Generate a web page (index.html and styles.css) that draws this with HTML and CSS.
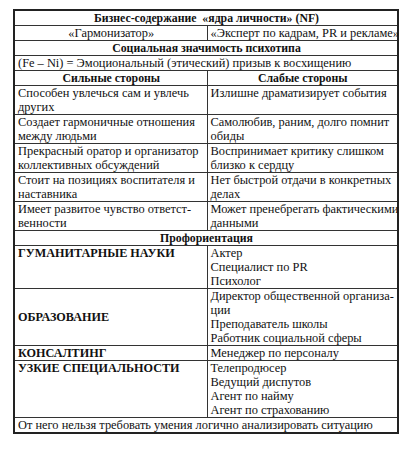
FILE: index.html
```html
<!DOCTYPE html>
<html lang="ru">
<head>
<meta charset="utf-8">
<link rel="stylesheet" href="styles.css">
</head>
<body>
<div class="page">
<table class="sheet">
  <colgroup><col class="c1"><col class="c2"></colgroup>
  <tr><td colspan="2" class="head">Бизнес-содержание&nbsp; «ядра личности» (NF)</td></tr>
  <tr><td class="center">«Гармонизатор»</td><td class="center">«Эксперт по кадрам, PR и рекламе»</td></tr>
  <tr><td colspan="2" class="head">Социальная значимость психотипа</td></tr>
  <tr><td colspan="2">(Fe – Ni) = Эмоциональный (этический) призыв к восхищению</td></tr>
  <tr><td class="head">Сильные стороны</td><td class="head">Слабые стороны</td></tr>
  <tr><td>Способен увлечься сам и увлечь<br>других</td><td>Излишне драматизирует события</td></tr>
  <tr><td>Создает гармоничные отношения<br>между людьми</td><td>Самолюбив, раним, долго помнит<br>обиды</td></tr>
  <tr><td>Прекрасный оратор и организатор<br>коллективных обсуждений</td><td>Воспринимает критику слишком<br>близко к сердцу</td></tr>
  <tr><td>Стоит на позициях воспитателя и<br>наставника</td><td>Нет быстрой отдачи в конкретных<br>делах</td></tr>
  <tr><td>Имеет развитое чувство ответст-<br>венности</td><td>Может пренебрегать фактическими<br>данными</td></tr>
  <tr><td colspan="2" class="head">Профориентация</td></tr>
  <tr><td class="field">ГУМАНИТАРНЫЕ НАУКИ</td><td>Актер<br>Специалист по PR<br>Психолог</td></tr>
  <tr><td class="field mid">ОБРАЗОВАНИЕ</td><td>Директор общественной организа-<br>ции<br>Преподаватель школы<br>Работник социальной сферы</td></tr>
  <tr><td class="field">КОНСАЛТИНГ</td><td>Менеджер по персоналу</td></tr>
  <tr><td class="field">УЗКИЕ СПЕЦИАЛЬНОСТИ</td><td>Телепродюсер<br>Ведущий диспутов<br>Агент по найму<br>Агент по страхованию</td></tr>
  <tr><td colspan="2">От него нельзя требовать умения логично анализировать ситуацию</td></tr>
</table>
</div>
</body>
</html>
```
FILE: styles.css
```css
html, body {
  margin: 0;
  padding: 0;
  background: #fff;
}
.page {
  padding: 9px 0 0 13px;
}
.sheet {
  border-collapse: collapse;
  width: 386px;
  table-layout: fixed;
  border: 2px solid #222;
  font-family: "Liberation Serif", "DejaVu Serif", serif;
  font-size: 12.4px;
  line-height: 14px;
  color: #111;
}
.c1 { width: 193px; }
.sheet td {
  border: 1px solid #333;
  padding: 0 2px 0 3px;
  vertical-align: top;
  text-align: left;
  white-space: nowrap;
}
.sheet td.head {
  font-weight: bold;
  font-size: 11.8px;
  text-align: center;
}
.sheet td.center {
  text-align: center;
}
.sheet td.field {
  font-weight: bold;
  font-size: 12.2px;
}
.sheet td.mid {
  vertical-align: middle;
}
```
